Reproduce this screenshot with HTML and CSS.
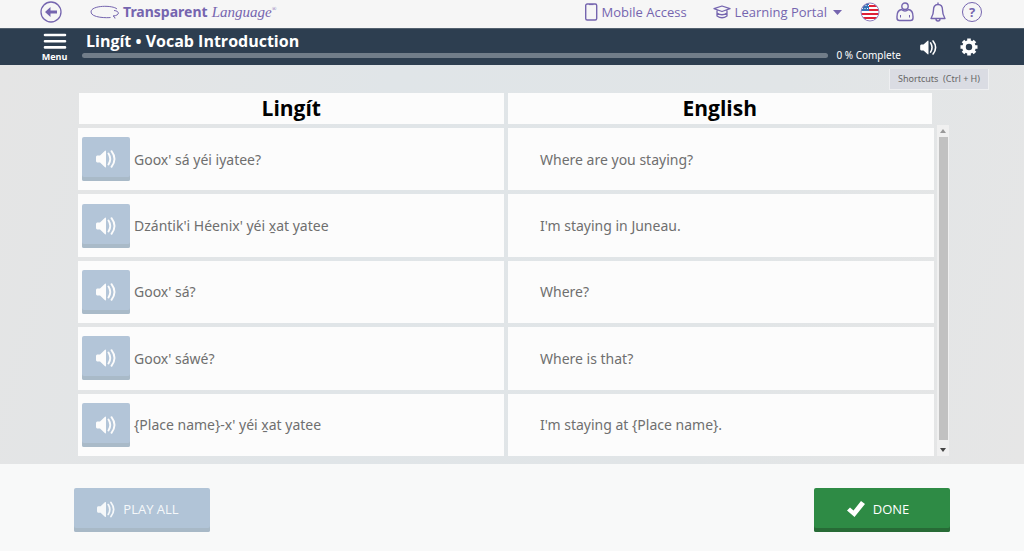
FILE: index.html
```html
<!DOCTYPE html>
<html lang="en">
<head>
<meta charset="utf-8">
<title>Lingít • Vocab Introduction</title>
<link rel="stylesheet" href="styles.css">
</head>
<body>
<svg class="sprite" aria-hidden="true">
  <symbol id="sound" viewBox="0 0 20 18">
    <path d="M0 7Q0 5.700 1.200 5.500H4L9 .8Q10 .2 10 1.5V16.500Q10 17.800 9 17.200L4 12.500H1.200Q0 12.300 0 11Z" fill="currentColor"/>
    <path d="M12.500 3.500Q16 9 12.500 14.500M15.500 1.200Q21.500 9 15.500 16.800" fill="none" stroke="currentColor" stroke-width="1.900" stroke-linecap="round"/>
  </symbol>
</svg>

<header class="topbar">
  <a class="back" href="#" aria-label="Back">
    <svg width="22" height="22" viewBox="0 0 22 22"><circle cx="11" cy="11" r="10" fill="none" stroke="currentColor" stroke-width="1.300"/><path d="M5 11L10.500 6V9.500H17V12.500H10.500V16Z" fill="currentColor"/></svg>
  </a>
  <a class="brand" href="#">
    <svg width="30" height="14" viewBox="0 0 30 14" fill="none" stroke="currentColor"><path d="M27 4C23 0 1 0 1 7C1 13 18 13 20.500 12.500M24 5.500C30 6 30 10.500 23 11Q25 11.500 25 13.500" stroke-width="1"/></svg>
    <span class="brand-main">Transparent</span><span class="brand-sub">Language<sup>®</sup></span>
  </a>
  <nav class="top-links">
    <a class="mobile" href="#">
      <svg width="14" height="18" viewBox="0 0 14 18" fill="none" stroke="currentColor"><rect x="1.700" y="1" width="11" height="16" rx="1.500" stroke-width="1.400"/><path d="M5 1.600H9.500"/></svg>
      <span>Mobile Access</span>
    </a>
    <a class="portal" href="#">
      <svg width="18" height="14" viewBox="0 0 18 14" fill="none" stroke="currentColor" stroke-width="1.300" stroke-linejoin="round"><path d="M9 1L17 3.700L9 6.500L1 3.700ZM4 5.500V11Q9 14.500 14 11V5.500M4 8Q9 11.500 14 8"/></svg>
      <span>Learning Portal</span>
      <svg class="caret" width="9" height="5" viewBox="0 0 9 5"><path d="M0 0H9L4.500 5Z" fill="currentColor"/></svg>
    </a>
  </nav>
  <div class="top-icons">
    <button type="button" aria-label="Interface language">
      <svg width="20" height="20" viewBox="0 0 20 20"><defs><clipPath id="flag"><circle cx="10" cy="10" r="9"/></clipPath></defs><g clip-path="url(#flag)"><path d="M0 0H20V20H0Z" fill="#fff"/><path d="M0 4H20M0 8H20M0 12H20M0 16H20" stroke="#df2138" stroke-width="2"/><path d="M0 0H9V9H0Z" fill="#3572b5"/><path d="M3 3.500H9M2 6.500H9" stroke="#fff" stroke-dasharray="1 1.500"/></g><circle cx="10" cy="10" r="9" fill="none" stroke="#8d7fc0" stroke-width="1"/></svg>
    </button>
    <button type="button" aria-label="Account">
      <svg width="18" height="20" viewBox="0 0 18 20" fill="none" stroke="currentColor" stroke-width="1.400"><circle cx="9" cy="4.200" r="3.200"/><path d="M5.500 7.500C2.500 8 1 11 1 14.500V16Q1 18.500 3.500 18.500H14.500Q17 18.500 17 16V14.500C17 11 15.500 8 12.500 7.500Q9 10.500 5.500 7.500Z"/><path d="M4.500 13V15.500M13.500 13V15.500" stroke-width="1"/></svg>
    </button>
    <button type="button" aria-label="Notifications">
      <svg width="16" height="20" viewBox="0 0 16 20" fill="none" stroke="currentColor" stroke-width="1.400" stroke-linejoin="round"><path d="M8 .5V2.500M8 2.500C4.500 2.500 3.500 5 3.500 8C3.500 12.500 2.500 14 1 16.500H15C13.500 14 12.500 12.500 12.500 8C12.500 5 11.500 2.500 8 2.500ZM6 17Q6 19 8 19Q10 19 10 17"/></svg>
    </button>
    <button type="button" class="help" aria-label="Help"><span>?</span></button>
  </div>
</header>

<section class="lesson-bar">
  <button type="button" class="menu">
    <svg width="24" height="17" viewBox="0 0 24 17" stroke="currentColor" stroke-width="2.600" stroke-linecap="round"><path d="M2 2H22M2 8.200H22M2 14.400H22"/></svg>
    <span>Menu</span>
  </button>
  <div class="lesson">
    <h1>Lingít • Vocab Introduction</h1>
    <div class="progress-line">
      <div class="track" role="progressbar" aria-label="Lesson progress" aria-valuenow="0" aria-valuemin="0" aria-valuemax="100"></div>
      <span>0 % Complete</span>
    </div>
  </div>
  <div class="lesson-tools">
    <button type="button" aria-label="Volume"><svg width="17" height="15"><use href="#sound"/></svg></button>
    <button type="button" aria-label="Settings">
      <svg width="18" height="18" viewBox="0 0 18 18" fill="none" stroke="currentColor"><circle cx="9" cy="9" r="5" stroke-width="3.600"/><path d="M9 .500V3M9 15V17.500M.500 9H3M15 9H17.500M3 3L4.800 4.800M13.200 13.200L15 15M3 15L4.800 13.200M13.200 4.800L15 3" stroke-width="3.600"/></svg>
    </button>
  </div>
</section>

<main class="stage">
  <button type="button" class="shortcuts">Shortcuts&nbsp; (Ctrl + H)</button>
  <table class="vocab">
    <thead>
      <tr><th scope="col">Lingít</th><th scope="col">English</th></tr>
    </thead>
    <tbody>
      <tr>
        <td><button type="button" class="play" aria-label="Play phrase"><svg width="20" height="18"><use href="#sound"/></svg></button>Goox' sá yéi iyatee?</td>
        <td>Where are you staying?</td>
      </tr>
      <tr>
        <td><button type="button" class="play" aria-label="Play phrase"><svg width="20" height="18"><use href="#sound"/></svg></button>Dzántik'i Héenix' yéi x̱at yatee</td>
        <td>I'm staying in Juneau.</td>
      </tr>
      <tr>
        <td><button type="button" class="play" aria-label="Play phrase"><svg width="20" height="18"><use href="#sound"/></svg></button>Goox' sá?</td>
        <td>Where?</td>
      </tr>
      <tr>
        <td><button type="button" class="play" aria-label="Play phrase"><svg width="20" height="18"><use href="#sound"/></svg></button>Goox' sáwé?</td>
        <td>Where is that?</td>
      </tr>
      <tr>
        <td><button type="button" class="play" aria-label="Play phrase"><svg width="20" height="18"><use href="#sound"/></svg></button>{Place name}-x' yéi x̱at yatee</td>
        <td>I'm staying at {Place name}.</td>
      </tr>
    </tbody>
  </table>
  <div class="scrollbar" aria-hidden="true">
    <svg width="6" height="4" viewBox="0 0 6 4"><path d="M3 0L6 4H0Z" fill="#999"/></svg>
    <div class="thumb"></div>
    <svg width="6" height="4" viewBox="0 0 6 4"><path d="M0 0H6L3 4Z" fill="#444"/></svg>
  </div>
</main>

<footer class="actions">
  <button type="button" class="action play-all"><svg width="18" height="17"><use href="#sound"/></svg>PLAY ALL</button>
  <button type="button" class="action done"><svg width="18" height="16" viewBox="0 0 18 16"><path d="M0 9.500L3 6.500L6.500 9.500L14 0L18 3L7.500 16Z" fill="currentColor"/></svg>DONE</button>
</footer>
</body>
</html>
```

FILE: styles.css
```css
* {
  box-sizing: border-box;
}

body {
  margin: 0;
  min-height: 100vh;
  display: flex;
  flex-direction: column;
  font-family: "Open Sans", "Noto Sans", sans-serif;
  background: #f8f9f9;
}

button {
  margin: 0;
  padding: 0;
  border: 0;
  background: none;
  color: inherit;
  font: inherit;
  cursor: pointer;
}

a {
  color: inherit;
  text-decoration: none;
}

svg {
  display: block;
  flex: none;
}

.sprite {
  position: absolute;
  width: 0;
  height: 0;
}

/* Top bar */
.topbar {
  display: flex;
  align-items: center;
  height: 28px;
  padding: 0 42px 4px 40px;
  background: #f6f6f6;
  color: #7565af;
}

.brand {
  display: flex;
  align-items: center;
  margin-left: 28px;
  line-height: 20px;
}

.brand-main {
  margin-left: 3px;
  font-family: "Noto Sans", sans-serif;
  font-size: 14px;
  font-weight: 700;
}

.brand-sub {
  margin-left: 4px;
  font-family: "Liberation Serif", serif;
  font-size: 15px;
  font-style: italic;
}

.brand-sub sup {
  font-size: 6px;
  line-height: 1;
}

.top-links {
  display: flex;
  gap: 26px;
  margin-left: auto;
  font-size: 13px;
}

.top-links a {
  display: flex;
  align-items: center;
  gap: 4px;
}

.top-links .caret {
  margin-left: 2px;
}

.top-icons {
  display: flex;
  align-items: center;
  gap: 16px;
  margin-left: 18px;
}

.help {
  width: 20px;
  height: 20px;
  border: 1px solid #7565af;
  border-radius: 50%;
  font-size: 13px;
  font-weight: 700;
  line-height: 18px;
}

/* Lesson bar */
.lesson-bar {
  position: relative;
  display: flex;
  height: 37px;
  padding: 0 46px 0 40px;
  background: #2d3e50;
  border-top: 1px solid #53616f;
  box-shadow: 0 4px 0 #d0d2db;
  color: #fff;
}

.menu {
  display: flex;
  flex-direction: column;
  align-items: center;
  width: 29px;
  padding-top: 4px;
  font-size: 9px;
  font-weight: 700;
  line-height: 14px;
}

.lesson {
  flex: 1;
  margin-left: 13px;
}

.lesson h1 {
  margin: 0 0 0 4px;
  font-size: 16px;
  line-height: 24px;
}

.progress-line {
  display: flex;
  align-items: center;
  gap: 8px;
  font-family: "Noto Sans", sans-serif;
  font-size: 10px;
  line-height: 5px;
}

.track {
  flex: 1;
  height: 5px;
  border-radius: 3px;
  background: #717d89;
}

.lesson-tools {
  display: flex;
  align-items: center;
  gap: 23px;
  margin-left: 19px;
}

/* Vocabulary table */
.stage {
  position: relative;
  flex: 1;
  display: flex;
  gap: 3px;
  padding: 28px 75px 8px 78px;
  background: linear-gradient(105deg, #e5e5e5 0%, #e0e5e8 35%, #e1e5e7 70%, #e6e6e6 100%);
}

.shortcuts {
  position: absolute;
  top: 4px;
  right: 35px;
  padding: 0 8px;
  border: 1px solid #eeeff1;
  border-top: 0;
  background: #dadce3;
  color: #666;
  font-family: "Noto Sans", sans-serif;
  font-size: 9px;
  line-height: 20px;
}

.vocab {
  flex: 1;
  display: flex;
  flex-direction: column;
  gap: 4px;
}

.vocab thead,
.vocab th {
  display: block;
}

.vocab thead {
  padding: 0 2px 0 1px;
}

.vocab tr {
  display: grid;
  grid-template-columns: 1fr 1fr;
  gap: 4px;
}

.vocab th {
  padding: 0;
  background: #fcfcfc;
  color: #000;
  font-size: 21px;
  line-height: 31px;
}

.vocab tbody {
  flex: 1;
  display: grid;
  grid-auto-rows: 1fr;
  gap: 4px;
}

.vocab td {
  display: flex;
  align-items: center;
  gap: 4px;
  min-height: 56px;
  padding: 0 4px;
  background: #fcfcfc;
  color: #6f6f6f;
  font-family: "Noto Sans", sans-serif;
  font-size: 14px;
}

.vocab td + td {
  padding-left: 32px;
}

.play {
  display: grid;
  place-items: center;
  width: 48px;
  height: 44px;
  border-radius: 2px;
  box-shadow: inset 0 -4px 0 #a9bac8;
  background: #b3c5d8;
  color: #fcfcfc;
}

.scrollbar {
  display: flex;
  flex-direction: column;
  align-items: center;
  gap: 4px;
  width: 12px;
  margin-top: 32px;
  padding: 4px 0;
  background: #f0f0f0;
}

.thumb {
  flex: 1;
  width: 9px;
  margin-bottom: 4px;
  background: #c1c1c1;
}

/* Footer */
.actions {
  display: flex;
  justify-content: space-between;
  padding: 24px 74px 19px;
}

.action {
  display: flex;
  align-items: center;
  justify-content: center;
  gap: 8px;
  width: 136px;
  height: 44px;
  padding: 0 8px 2px 0;
  border-radius: 2px;
  color: #fff;
  font-size: 13px;
}

.play-all {
  box-shadow: inset 0 -4px 0 #a8b9c7;
  background: #b1c4d7;
  color: #f5f8fa;
}

.done {
  box-shadow: inset 0 -4px 0 #276b36;
  background: #2e8b45;
}
```
